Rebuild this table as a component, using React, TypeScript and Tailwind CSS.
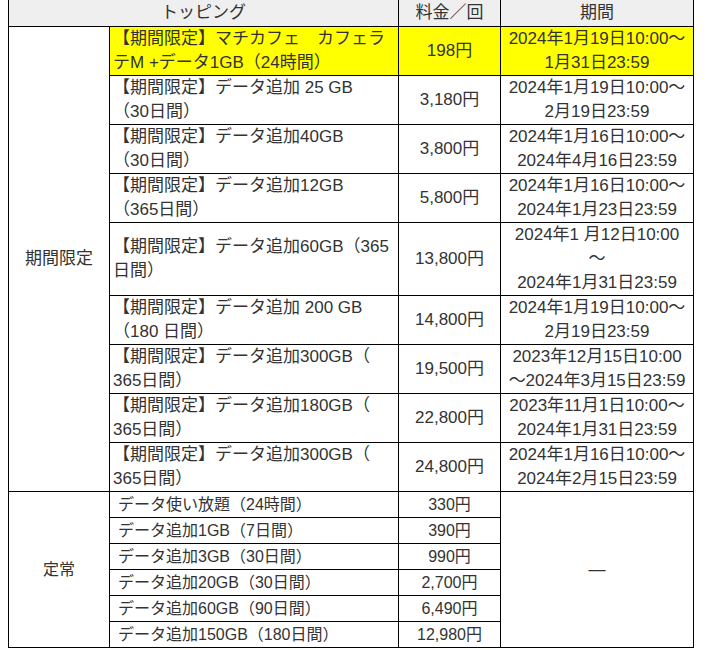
import React from "react";

type Row = { name: React.ReactNode; price: string; period: React.ReactNode; h: string; yellow?: boolean };

const limited: Row[] = [
  { name: <>【期間限定】マチカフェ　カフェラ<br />テM +データ1GB（24時間）</>, price: "198円", period: <>2024年1月19日10:00～<br />1月31日23:59</>, h: "h-[49px]", yellow: true },
  { name: <>【期間限定】データ追加 25 GB<br />（30日間）</>, price: "3,180円", period: <>2024年1月19日10:00～<br />2月19日23:59</>, h: "h-[49px]" },
  { name: <>【期間限定】データ追加40GB<br />（30日間）</>, price: "3,800円", period: <>2024年1月16日10:00～<br />2024年4月16日23:59</>, h: "h-[49px]" },
  { name: <>【期間限定】データ追加12GB<br />（365日間）</>, price: "5,800円", period: <>2024年1月16日10:00～<br />2024年1月23日23:59</>, h: "h-[49px]" },
  { name: <>【期間限定】データ追加60GB（365<br />日間）</>, price: "13,800円", period: <>2024年1 月12日10:00<br />～<br />2024年1月31日23:59</>, h: "h-[73px]" },
  { name: <>【期間限定】データ追加 200 GB<br />（180 日間）</>, price: "14,800円", period: <>2024年1月19日10:00～<br />2月19日23:59</>, h: "h-[49px]" },
  { name: <>【期間限定】データ追加300GB（<br />365日間）</>, price: "19,500円", period: <>2023年12月15日10:00<br />～2024年3月15日23:59</>, h: "h-[49px]" },
  { name: <>【期間限定】データ追加180GB（<br />365日間）</>, price: "22,800円", period: <>2023年11月1日10:00～<br />2024年1月31日23:59</>, h: "h-[49px]" },
  { name: <>【期間限定】データ追加300GB（<br />365日間）</>, price: "24,800円", period: <>2024年1月16日10:00～<br />2024年2月15日23:59</>, h: "h-[49px]" },
];

const regular = [
  ["データ使い放題（24時間）", "330円"],
  ["データ追加1GB（7日間）", "390円"],
  ["データ追加3GB（30日間）", "990円"],
  ["データ追加20GB（30日間）", "2,700円"],
  ["データ追加60GB（90日間）", "6,490円"],
  ["データ追加150GB（180日間）", "12,980円"],
];

const cell = "border border-black align-middle p-0";

export default function App() {
  return (
    <div
      className="w-[716px] h-[650px] overflow-hidden bg-white text-[#333]"
      style={{ fontFamily: "'Liberation Sans', 'Noto Sans CJK JP', sans-serif" }}
    >
      <table className="ml-[8px] mt-[-1px] table-fixed border-collapse w-[685px] text-[17px] leading-[24px]">
        <colgroup>
          <col className="w-[101px]" />
          <col className="w-[289px]" />
          <col className="w-[102px]" />
          <col className="w-[193px]" />
        </colgroup>
        <tbody>
          <tr className="h-[27px] bg-[#efefef]">
            <td colSpan={2} className={`${cell} text-center`}>トッピング</td>
            <td className={`${cell} text-center`}>料金／回</td>
            <td className={`${cell} text-center`}>期間</td>
          </tr>
          {limited.map((r, i) => (
            <tr key={i} className={r.h}>
              {i === 0 && (
                <td rowSpan={limited.length} className={`${cell} text-center`}>期間限定</td>
              )}
              <td className={`${cell} pl-[3px] whitespace-nowrap ${r.yellow ? "bg-[#ffff00]" : ""}`}>{r.name}</td>
              <td className={`${cell} text-center ${r.yellow ? "bg-[#ffff00]" : ""}`}>{r.price}</td>
              <td className={`${cell} text-center whitespace-nowrap ${r.yellow ? "bg-[#ffff00]" : ""}`}>{r.period}</td>
            </tr>
          ))}
          {regular.map(([n, p], i) => (
            <tr key={n} className="h-[26px]">
              {i === 0 && (
                <td rowSpan={regular.length} className={`${cell} text-center text-[16px]`}>定常</td>
              )}
              <td className={`${cell} pl-[8px] text-[16px] leading-[25px] whitespace-nowrap`}>{n}</td>
              <td className={`${cell} text-center text-[16px] leading-[25px]`}>{p}</td>
              {i === 0 && (
                <td rowSpan={regular.length} className={`${cell} text-center`}>—</td>
              )}
            </tr>
          ))}
        </tbody>
      </table>
    </div>
  );
}
